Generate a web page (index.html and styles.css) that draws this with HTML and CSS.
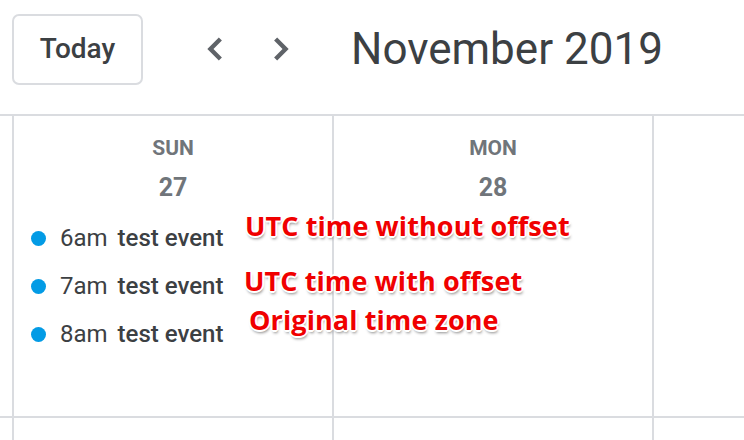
FILE: index.html
```html
<!DOCTYPE html>
<html>
<head>
<meta charset="utf-8">
<link rel="stylesheet" href="styles.css">
</head>
<body>
<div class="page">
  <header class="toolbar">
    <button class="today">Today</button>
    <div class="navs">
      <span class="nav"><svg viewBox="0 0 24 24"><path d="M15.6 7.6 14 6l-6 6 6 6 1.6-1.6L11.2 12z" fill="#5f6368"/></svg></span>
      <span class="nav"><svg viewBox="0 0 24 24"><path d="M8.4 16.4 10 18l6-6-6-6-1.6 1.6 4.4 4.4z" fill="#5f6368"/></svg></span>
    </div>
    <h1 class="title">November 2019</h1>
  </header>
  <main class="grid">
    <div class="row">
      <div class="cell">
        <div class="dow">SUN</div>
        <div class="date">27</div>
        <ul class="events">
          <li class="event"><span class="dot"></span><span class="time">6am</span><span class="name">test event</span></li>
          <li class="event"><span class="dot"></span><span class="time">7am</span><span class="name">test event</span></li>
          <li class="event"><span class="dot"></span><span class="time">8am</span><span class="name">test event</span></li>
        </ul>
      </div>
      <div class="cell">
        <div class="dow">MON</div>
        <div class="date">28</div>
      </div>
      <div class="cell last"></div>
    </div>
    <div class="row"><div class="cell"></div><div class="cell"></div><div class="cell last"></div></div>
    <div class="note n1">UTC time without offset</div>
    <div class="note n2">UTC time with offset</div>
    <div class="note n3">Original time zone</div>
  </main>
</div>
</body>
</html>
```
FILE: styles.css
```css
html, body { margin: 0; padding: 0; background: #fff; }
body { width: 744px; height: 440px; overflow: hidden; font-family: Roboto, "Liberation Sans", sans-serif; color: #3c4043; }
.page { width: 744px; height: 440px; overflow: hidden; }
.toolbar {
  height: 114px;
  border-bottom: 2px solid #dadce0;
  display: flex;
  align-items: flex-start;
}
.today {
  margin: 14px 0 0 12px;
  width: 131px;
  height: 71px;
  border: 2px solid #dadce0;
  border-radius: 7px;
  background: #fff;
  font-family: Roboto, "Liberation Sans", sans-serif;
  font-size: 28px;
  font-weight: 500;
  color: #3c4043;
  padding: 0 0 2px 0;
}
.navs { display: flex; gap: 18px; margin: 26px 0 0 48px; }
.nav { width: 48px; height: 46px; display: flex; align-items: center; justify-content: center; }
.nav svg { width: 46px; height: 46px; display: block; }
.title {
  margin: 19px 0 0 46px;
  font-size: 44px;
  font-weight: 400;
  color: #3c4043;
  line-height: 60px;
  white-space: nowrap;
}
.grid { position: relative; height: 324px; overflow: hidden; }
.row { display: flex; padding-left: 12px; border-bottom: 2px solid #dadce0; height: 300px; }
.cell { width: 318px; border-left: 2px solid #dadce0; flex: none; display: flex; flex-direction: column; }
.cell.last { flex: 1 1 auto; width: auto; min-width: 0; }
.dow { text-align: center; font-size: 21px; font-weight: 700; color: #70757a; margin-top: 19px; line-height: 26px; }
.date { text-align: center; font-size: 25px; font-weight: 700; color: #70757a; margin-top: 12px; line-height: 30px; }
.events { list-style: none; margin: 11px 0 0 0; padding: 0 0 0 17px; }
.event { display: flex; align-items: center; height: 48px; font-size: 24px; color: #3c4043; }
.dot { width: 15px; height: 15px; border-radius: 50%; background: #039be5; margin-right: 14px; flex: none; }
.time { margin-right: 10px; }
.name { font-weight: 500; }
.note {
  position: absolute;
  font-family: "Open Sans", "DejaVu Sans", sans-serif;
  font-weight: 700;
  font-size: 27px;
  letter-spacing: 0.1px;
  color: #f00000;
  white-space: nowrap;
  text-shadow: 2px 0 0 #fff, -2px 0 0 #fff, 0 2px 0 #fff, 0 -2px 0 #fff, 1px 1px 0 #fff, -1px -1px 0 #fff, 1px -1px 0 #fff, -1px 1px 0 #fff, 1px 3px 3px rgba(0,0,0,.45);
  line-height: 34px;
}
.n1 { left: 245px; top: 93px; }
.n2 { left: 244px; top: 148px; }
.n3 { left: 249px; top: 187px; }
```
